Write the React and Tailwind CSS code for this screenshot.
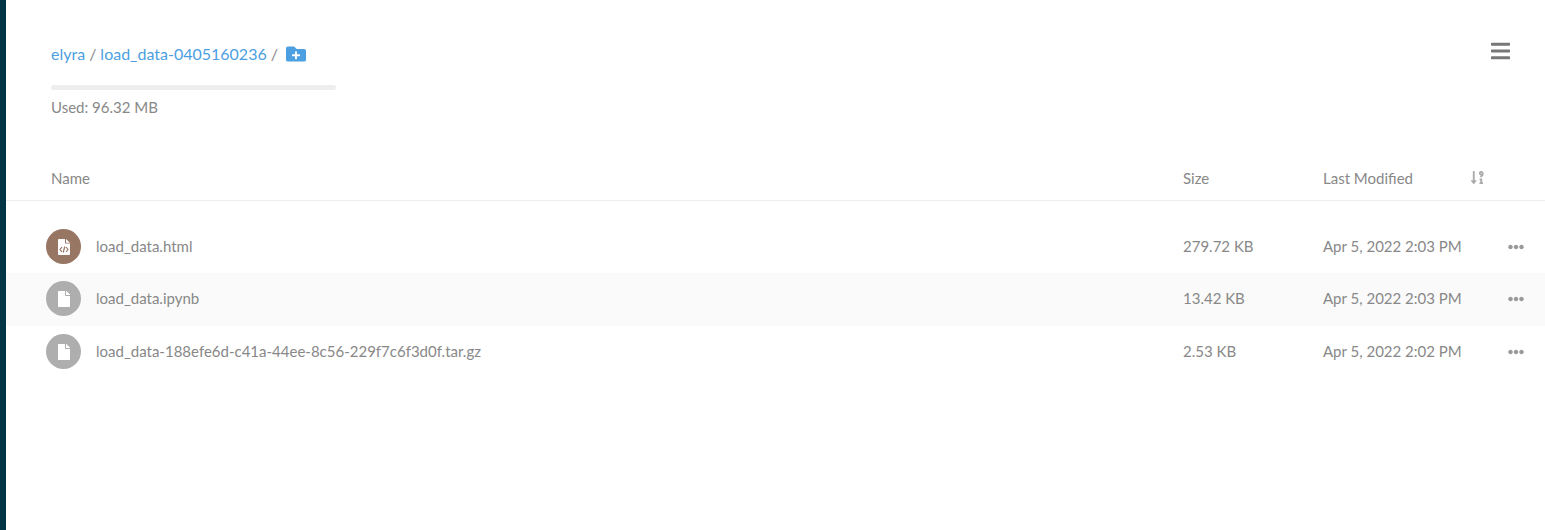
import React from "react";
import { FaFolderPlus, FaBars, FaEllipsisH, FaFile, FaSortNumericDownAlt } from "react-icons/fa";

const rows = [
  { name: "load_data.html", size: "279.72 KB", date: "Apr 5, 2022 2:03 PM", html: true },
  { name: "load_data.ipynb", size: "13.42 KB", date: "Apr 5, 2022 2:03 PM", alt: true, lift: true },
  { name: "load_data-188efe6d-c41a-44ee-8c56-229f7c6f3d0f.tar.gz", size: "2.53 KB", date: "Apr 5, 2022 2:02 PM", lift: true },
];

function HtmlFile() {
  return (
    <svg viewBox="0 0 12 16" className="h-[16px] w-[12px]">
      <path fill="#ffffff" d="M1 0H7V4.5H12V15C12 15.6 11.6 16 11 16H1C.4 16 0 15.6 0 15V1C0 .4.4 0 1 0ZM8 0 12 3.7H8Z" />
      <path fill="none" stroke="#987664" strokeWidth="1.2" d="M4 8 2 10.5 4 13M8 8 10 10.5 8 13M6.8 7.5 5.2 13.5" />
    </svg>
  );
}

export default function App() {
  return (
    <div className="flex h-[530px] w-full overflow-hidden bg-white font-['Lato','Liberation_Sans',sans-serif] text-[15px] leading-[20px] text-[#888888]">
      <div className="w-[6px] shrink-0 bg-[#003545]" />
      <main className="flex min-w-0 flex-1 flex-col">
        <header className="flex justify-between pl-[45px] pr-[35px] pt-[44px]">
          <div className="flex w-[285px] flex-col">
            <div className="flex h-[20px] items-center text-[16px]">
              <span className="text-[#4c9fe0]">elyra</span>
              <span className="mx-[4px] text-[#888888]">/</span>
              <span className="text-[#4c9fe0]">load_data-0405160236</span>
              <span className="ml-[4px] text-[#888888]">/</span>
              <FaFolderPlus className="ml-[8px] h-[20px] w-[20px] text-[#4c9fe0]" />
            </div>
            <div className="mt-[21px] h-[5px] rounded-full bg-[#eeeeee]" />
            <div className="mt-[7px]">Used: 96.32 MB</div>
          </div>
          <FaBars className="mt-[-4px] h-[22px] w-[19px] text-[#777777]" />
        </header>
        <div className="mt-[41px] flex h-[43px] items-center border-b border-[#eeeeee] pb-[3px] pl-[45px]">
          <div className="flex-1">Name</div>
          <div className="w-[140px]">Size</div>
          <div className="flex w-[222px] items-center">
            <span className="w-[147px]">Last Modified</span>
            <FaSortNumericDownAlt className="h-[15px] w-[15px] text-[#aaaaaa]" />
          </div>
        </div>
        <div className="mt-[19px] flex flex-col">
          {rows.map((r) => (
            <div key={r.name} className={`flex h-[53px] items-center pl-[40px] ${r.lift ? "pb-[2px]" : ""} ${r.alt ? "bg-[#fafafa]" : ""}`}>
              <div className={`flex h-[35px] w-[35px] items-center justify-center rounded-full ${r.html ? "bg-[#987664]" : "bg-[#aeaeae]"}`}>
                {r.html ? <HtmlFile /> : <FaFile className="h-[16px] w-[14px] text-white" />}
              </div>
              <div className="mb-[2px] ml-[15px] flex-1">{r.name}</div>
              <div className="mb-[2px] w-[140px]">{r.size}</div>
              <div className="mb-[2px] w-[184px]">{r.date}</div>
              <FaEllipsisH className="h-[16px] w-[18px] text-[#999999]" />
              <div className="w-[20px]" />
            </div>
          ))}
        </div>
      </main>
    </div>
  );
}
